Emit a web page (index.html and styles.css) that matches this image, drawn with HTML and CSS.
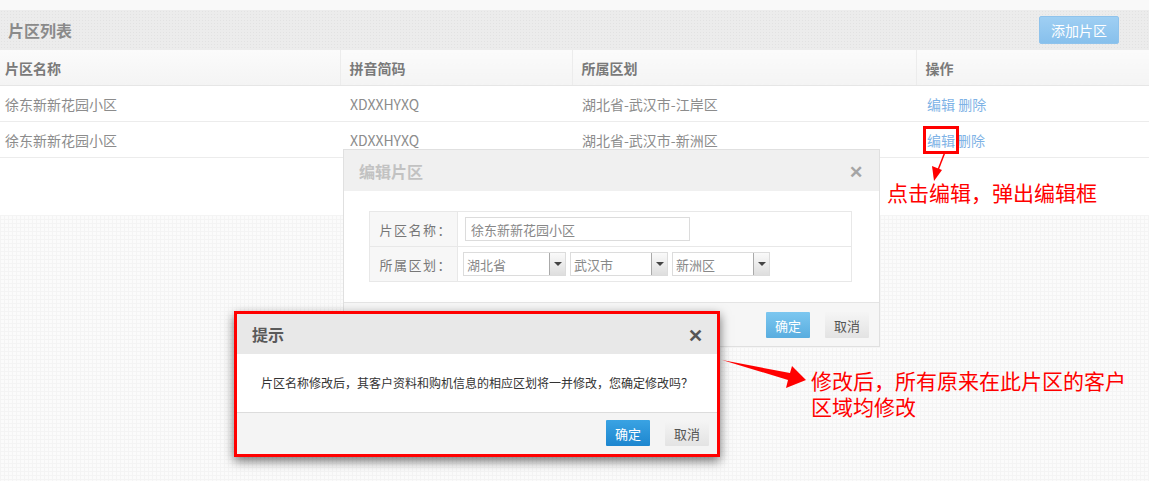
FILE: index.html
```html
<!DOCTYPE html>
<html lang="zh-CN">
<head>
  <meta charset="UTF-8" />
  <title>片区列表</title>
  <link rel="stylesheet" href="styles.css">
</head>
<body>
  <div class="top-strip"></div>
  <div class="panel-head">
    <h2>片区列表</h2>
    <button class="btn-add">添加片区</button>
  </div>
  <table class="grid">
    <colgroup><col style="width:340px"><col style="width:232px"><col style="width:344px"><col></colgroup>
    <thead>
      <tr><th>片区名称</th><th>拼音简码</th><th>所属区划</th><th>操作</th></tr>
    </thead>
    <tbody>
      <tr><td>徐东新新花园小区</td><td>XDXXHYXQ</td><td>湖北省-武汉市-江岸区</td><td><a>编辑</a> <a>删除</a></td></tr>
      <tr><td>徐东新新花园小区</td><td>XDXXHYXQ</td><td>湖北省-武汉市-新洲区</td><td><a class="marked">编辑</a><a>删除</a></td></tr>
    </tbody>
  </table>
  <div class="blank"></div>
  <div class="canvas"></div>

  <!-- edit dialog -->
  <div class="dlg dlg-edit">
    <div class="dlg-head"><span class="dlg-title">编辑片区</span><span class="dlg-close">✕</span></div>
    <div class="dlg-body">
      <table class="form">
        <tr><th>片区名称：</th><td><input class="txt" value="徐东新新花园小区"></td></tr>
        <tr><th>所属区划：</th><td>
          <div class="selects">
            <div class="sel w1"><span>湖北省</span><i></i></div>
            <div class="sel w2"><span>武汉市</span><i></i></div>
            <div class="sel w2"><span>新洲区</span><i></i></div>
          </div>
        </td></tr>
      </table>
    </div>
    <div class="dlg-foot">
      <button class="btn btn-ok light">确定</button>
      <button class="btn btn-cancel">取消</button>
    </div>
  </div>

  <!-- confirm dialog -->
  <div class="dlg dlg-confirm">
    <div class="dlg-head"><span class="dlg-title">提示</span><span class="dlg-close">✕</span></div>
    <div class="dlg-msg">片区名称修改后，其客户资料和购机信息的相应区划将一并修改，您确定修改吗？</div>
    <div class="dlg-foot">
      <button class="btn btn-ok">确定</button>
      <button class="btn btn-cancel">取消</button>
    </div>
  </div>

  <!-- annotations -->
  <svg class="arrows" width="1149" height="481" viewBox="0 0 1149 481">
    <line x1="945" y1="152" x2="938" y2="170" stroke="#f00" stroke-width="1.5"/>
    <polygon points="932,166 942,170 934,181" fill="#f00"/>
    <polygon points="722,360 790,373 792,366 806,380 786,388 788,380" fill="#f00"/>
  </svg>
  <div class="note note-1">点击编辑，弹出编辑框</div>
  <div class="note note-2"><div>修改后，所有原来在此片区的客户</div><div>区域均修改</div></div>
</body>
</html>
```

FILE: styles.css
```css
html, body { margin: 0; height: 100%; }
body {
  font-family: "Noto Sans CJK SC", "Liberation Sans", sans-serif;
  background: #fbfbfb;
  color: #888;
  position: relative;
  overflow: hidden;
}

.top-strip { height: 10px; background: #f9f9f9; }
.panel-head {
  height: 40px;
  display: flex;
  align-items: center;
  justify-content: space-between;
  padding: 0 30px 0 8px;
  background-color: #ececec;
  background-image: radial-gradient(#e2e2e2 0.6px, transparent 0.8px);
  background-size: 3px 3px;
}
.panel-head h2 { margin: 0; font-size: 16px; font-weight: bold; color: #8a8a8a; }
.btn-add {
  font-family: inherit;
  font-size: 14px;
  color: #fff;
  width: 80px;
  height: 28px;
  border: 1px solid #8fc3ec;
  border-radius: 2px;
  background: linear-gradient(#9fcff3, #87c0ec);
  padding: 0;
}

.grid { width: 100%; border-collapse: collapse; table-layout: fixed; background: #fff; font-size: 14px; }
.grid th {
  height: 35px;
  text-align: left;
  padding: 0 0 0 9px;
  background: linear-gradient(#fbfbfb, #f4f4f4);
  color: #7a7a7a;
  font-weight: bold;
  border-left: 1px solid #ececec;
  border-bottom: 1px solid #e6e6e6;
}
.grid th:first-child { border-left: 0; padding-left: 5px; }
.grid td { height: 35px; padding: 0 0 0 10px; color: #8c8c8c; border-bottom: 1px solid #ececec; }
.grid td:first-child { padding-left: 5px; }
.grid td:last-child { padding-left: 11px; }
.grid a { color: #7fb3e6; }
.grid a.marked { outline: 3px solid #f00; outline-offset: 1px; margin: 0 2px 0 0; }

.blank { height: 58px; background: #fff; }
.canvas {
  position: absolute;
  inset: 215px 0 0 0;
  background-color: #fbfbfb;
  background-image:
    linear-gradient(#f4f4f4 1px, transparent 1px),
    linear-gradient(90deg, #f4f4f4 1px, transparent 1px);
  background-size: 4px 4px;
}

/* dialogs */
.dlg { position: absolute; background: #fff; }
.dlg-head { display: flex; align-items: center; justify-content: space-between; }
.dlg-title { font-weight: bold; }
.dlg-close { font-weight: bold; }
.dlg-foot { display: flex; justify-content: flex-end; gap: 15px; }
.btn { font-family: inherit; font-size: 13px; width: 44px; padding: 0; border: 0; border-radius: 1px; }
.btn-ok { color: #fff; background: linear-gradient(#3aa3e3, #1d86cf); }
.btn-ok.light { background: linear-gradient(#7cc7f0, #59addf); }
.btn-cancel { color: #555; background: linear-gradient(#f5f5f5, #e3e3e3); }

.dlg-edit { left: 343px; top: 149px; width: 535px; height: 196px; border: 1px solid #e0e0e0; }
.dlg-edit .dlg-head { height: 41px; padding: 0 16px 0 15px; background: #f0f0f0; }
.dlg-edit .dlg-title { font-size: 16px; color: #c2c2c2; }
.dlg-edit .dlg-close { font-size: 17px; color: #a5a5a5; }
.dlg-body { padding: 20px 27px 20px 25px; border-bottom: 1px solid #e4e4e4; }
.form { width: 100%; border-collapse: collapse; font-size: 13px; }
.form th, .form td { height: 34px; border: 1px solid #e8e8e8; }
.form th { width: 88px; background: #f7f7f7; color: #777; font-weight: normal; text-align: right; padding-right: 5px; letter-spacing: 1.5px; box-sizing: border-box; }
.form td { padding: 0 7px; }
.txt { font-family: inherit; font-size: 13px; color: #888; width: 225px; height: 24px; box-sizing: border-box; border: 1px solid #dcdcdc; padding: 0 5px; }
.selects { display: flex; gap: 4px; margin-left: -2px; }
.sel { display: flex; align-items: center; justify-content: space-between; height: 24px; box-sizing: border-box; border: 1px solid #dcdcdc; font-size: 13px; color: #888; padding-left: 3px; }
.sel.w1 { width: 103px; }
.sel.w2 { width: 98px; }
.sel i { width: 15px; height: 22px; border-left: 1px solid #aaa; background: linear-gradient(#fafafa, #dedede); position: relative; }
.sel i::after { content: ""; position: absolute; left: 4px; top: 9px; border: 4px solid transparent; border-top-color: #444; border-bottom: 0; }
.dlg-edit .dlg-foot { padding: 9px 10px 0 0; background: #f6f6f6; height: 34px; }
.dlg-edit .btn { height: 26px; }

.dlg-confirm {
  left: 234px; top: 311px; width: 480px; height: 140px;
  border: 3px solid #f00;
  box-shadow: 0 4px 10px rgba(0,0,0,.55);
}
.dlg-confirm .dlg-head { height: 40px; padding: 0 14px 0 15px; background: #e8e8e8; }
.dlg-confirm .dlg-title { font-size: 16px; color: #5a5a5a; }
.dlg-confirm .dlg-close { font-size: 18px; color: #555; }
.dlg-msg { height: 58px; line-height: 58px; padding-left: 24px; font-size: 12px; color: #333; border-bottom: 1px solid #dcdcdc; }
.dlg-confirm .dlg-foot { background: #f4f4f4; height: 41px; padding: 7px 8px 0 0; box-sizing: border-box; }
.dlg-confirm .btn { height: 26px; }

/* annotations */
.arrows { position: absolute; left: 0; top: 0; pointer-events: none; }
.note { position: absolute; color: #f00; font-size: 21px; line-height: 26px; }
.note-1 { left: 887px; top: 179px; }
.note-2 { left: 811px; top: 367px; }
```
